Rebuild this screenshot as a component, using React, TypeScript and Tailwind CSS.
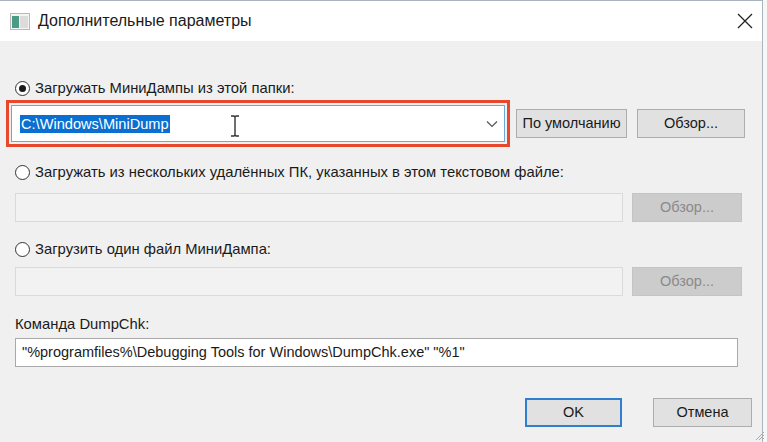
import React from "react";

const FONT = { fontFamily: '"Liberation Sans", "Noto Sans", Arial, sans-serif' };

function Radio({ checked, label }: { checked?: boolean; label: string }) {
  return (
    <div className="flex items-center h-[18px] ml-[15px]">
      <span className="w-[15px] h-[15px] rounded-full border border-[#333333] bg-white flex items-center justify-center">
        {checked && <span className="w-[7px] h-[7px] rounded-full bg-[#1a1a1a]" />}
      </span>
      <span className="ml-[5px] text-[14.8px] text-[#1a1a1a]">{label}</span>
    </div>
  );
}

function Btn({
  label,
  w,
  disabled,
  primary,
}: {
  label: string;
  w: string;
  disabled?: boolean;
  primary?: boolean;
}) {
  const base = "h-[29px] flex items-center justify-center text-[14.5px] shrink-0";
  if (disabled)
    return (
      <div className={`${base} ${w} bg-[#cccccc] border border-[#c4c4c4] text-[#8a8a8a]`}>{label}</div>
    );
  if (primary)
    return (
      <div className={`${base} ${w} bg-[#e1e1e1] border-2 border-[#2f7fd0] text-[#1a1a1a]`}>{label}</div>
    );
  return (
    <div className={`${base} ${w} bg-[#e1e1e1] border border-[#adadad] text-[#1a1a1a]`}>{label}</div>
  );
}

export default function App() {
  return (
    <div className="relative w-[767px] h-[442px] bg-[#f7f7f7] overflow-hidden" style={FONT}>
      <div className="w-[763px] h-[442px] flex flex-col border-t border-r border-[#aab4be] bg-[#f0f0f0]">
        {/* Title bar */}
        <div className="h-[40px] bg-white flex items-center shrink-0">
          <svg width="20" height="17" viewBox="0 0 20 17" className="ml-[10px]">
            <rect x="0.5" y="0.5" width="19" height="16" fill="#f4f4f4" stroke="#b9b9b9" />
            <rect x="2" y="3" width="7" height="12" fill="#4a9a86" />
            <rect x="10" y="3" width="8" height="12" fill="#dcdcdc" />
          </svg>
          <span className="ml-[8px] text-[16px] text-[#1a1a1a]">Дополнительные параметры</span>
          <svg width="16" height="16" viewBox="0 0 16 16" className="ml-auto mr-[9px]">
            <path d="M1 1 L15 15 M15 1 L1 15" stroke="#222" strokeWidth="1.3" />
          </svg>
        </div>

        {/* Body */}
        <div className="flex flex-col">
          <div className="mt-[38px]">
            <Radio checked label="Загружать МиниДампы из этой папки:" />
          </div>

          <div className="flex items-center mt-[3px]">
            <div className="ml-[6px] w-[504px] h-[47px] border-[3px] border-[#e8472b] p-[2px] flex">
              <div className="relative flex-1 bg-white border border-[#6fa6d8] flex items-center">
                <span className="ml-[8px] bg-[#0a6fd1] text-white text-[14.6px] px-[1px] leading-[18px]">
                  C:\Windows\MiniDump
                </span>
                <svg
                  width="10"
                  height="22"
                  viewBox="0 0 10 22"
                  className="absolute left-[218px] top-[9px]"
                >
                  <path d="M1 1 H4 L5 2 L6 1 H9 M5 2 V20 M1 21 H4 L5 20 L6 21 H9" stroke="#333" strokeWidth="1.4" fill="none" />
                </svg>
                <svg width="12" height="8" viewBox="0 0 12 8" className="ml-auto mr-[6px]">
                  <path d="M1 1.5 L6 6.5 L11 1.5" stroke="#555" strokeWidth="1.2" fill="none" />
                </svg>
              </div>
            </div>
            <div className="ml-[6px]">
              <Btn label="По умолчанию" w="w-[111px]" />
            </div>
            <div className="ml-[10px]">
              <Btn label="Обзор..." w="w-[108px]" />
            </div>
          </div>

          <div className="mt-[16px]">
            <Radio label="Загружать из нескольких удалённых ПК, указанных в этом текстовом файле:" />
          </div>
          <div className="flex mt-[12px] ml-[15px]">
            <div className="w-[608px] h-[29px] bg-[#f2f2f2] border border-[#dadada]" />
            <div className="ml-[9px]">
              <Btn label="Обзор..." w="w-[110px]" disabled />
            </div>
          </div>

          <div className="mt-[18px]">
            <Radio label="Загрузить один файл МиниДампа:" />
          </div>
          <div className="flex mt-[9px] ml-[15px]">
            <div className="w-[608px] h-[29px] bg-[#f2f2f2] border border-[#dadada]" />
            <div className="ml-[9px]">
              <Btn label="Обзор..." w="w-[110px]" disabled />
            </div>
          </div>

          <div className="mt-[20px] ml-[15px] h-[16px] flex items-center text-[14.8px] text-[#1a1a1a]">
            Команда DumpChk:
          </div>
          <div className="mt-[6px] ml-[15px] w-[723px] h-[29px] bg-white border border-[#a9a9a9] flex items-center">
            <span className="ml-[6px] text-[14.5px] text-[#1a1a1a]">
              "%programfiles%\Debugging Tools for Windows\DumpChk.exe" "%1"
            </span>
          </div>

          <div className="flex mt-[31px] ml-[525px]">
            <Btn label="OK" w="w-[97px]" primary />
            <div className="ml-[31px]">
              <Btn label="Отмена" w="w-[99px]" />
            </div>
          </div>
        </div>
      </div>

      {/* resize grip */}
      <svg width="12" height="12" viewBox="0 0 12 12" className="absolute right-[2px] bottom-[1px]">
        <path d="M11 3 L3 11 M11 6 L6 11 M11 9 L9 11" stroke="#a8a8a8" strokeWidth="1" />
      </svg>
    </div>
  );
}
